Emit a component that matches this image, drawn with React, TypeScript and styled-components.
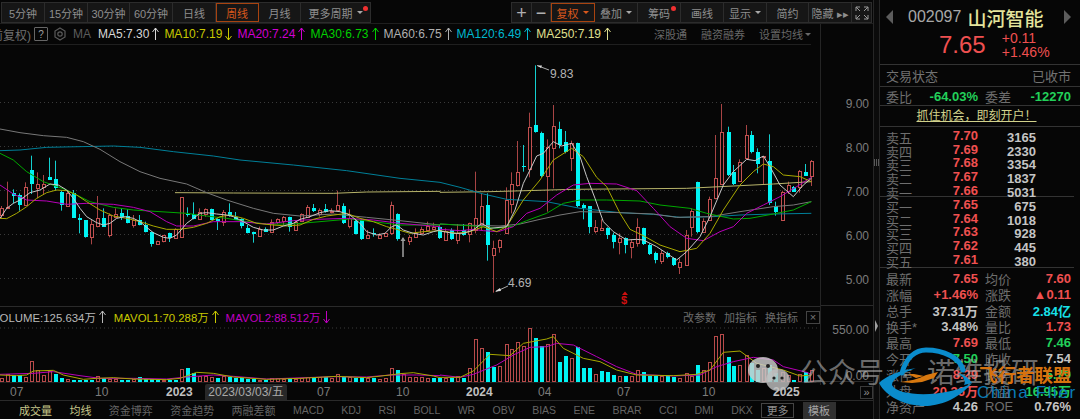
import React from 'react';
import styled, { createGlobalStyle } from 'styled-components';

const GlobalStyle = createGlobalStyle`
	html, body {
		margin: 0;
		padding: 0;
		background: #060606;
	}
	* {
		box-sizing: border-box;
	}
`;

const FONT = '"Liberation Sans", "Noto Sans CJK SC", sans-serif';
const RED = '#ef5050';
const GREEN = '#22d05a';
const BG = '#060606';

type Pt = [number, number];
type Candle = [number, number, number, number, number, 'r' | 'c'];
type Vol = [number, 'r' | 'c', number];

// chart data was read off the picture at 3x, so convert back with these
const LEFT_X = 0;
const RIGHT_X = 440;
const LEFT_Y = 120;
const RIGHT_Y = 70;
const VOL_Y = 295;

const candlesLeft: Candle[] = [
	[3, 265, 285, 258, 297, 'r'], [21, 262, 264, 185, 266, 'r'], [40, 218, 226, 208, 250, 'c'], [57, 226, 256, 220, 272, 'c'],
	[75, 200, 254, 187, 256, 'r'], [92, 150, 192, 107, 222, 'c'], [110, 192, 203, 157, 235, 'r'], [128, 192, 200, 165, 225, 'r'],
	[146, 170, 178, 113, 178, 'c'], [165, 178, 204, 122, 212, 'c'], [183, 215, 254, 212, 272, 'c'], [201, 218, 258, 210, 260, 'r'],
	[219, 218, 292, 210, 292, 'c'], [237, 293, 300, 282, 340, 'c'], [255, 300, 352, 300, 353, 'c'], [272, 313, 352, 300, 373, 'r'],
	[291, 295, 320, 228, 322, 'r'], [309, 294, 320, 265, 320, 'c'], [327, 285, 345, 280, 352, 'r'], [345, 282, 290, 265, 295, 'r'],
	[363, 280, 292, 265, 300, 'c'], [381, 288, 308, 268, 310, 'c'], [399, 300, 316, 285, 323, 'r'], [417, 300, 314, 285, 316, 'c'],
	[435, 314, 336, 305, 337, 'c'], [454, 336, 372, 335, 380, 'c'], [471, 364, 373, 362, 375, 'r'], [489, 346, 365, 345, 367, 'r'],
	[507, 340, 356, 338, 366, 'c'], [525, 328, 355, 325, 357, 'r'], [543, 232, 352, 232, 353, 'r'], [561, 282, 286, 262, 290, 'c'],
	[579, 282, 296, 247, 298, 'c'], [597, 275, 296, 265, 298, 'r'], [615, 267, 282, 265, 290, 'r'], [633, 266, 298, 266, 300, 'c'],
	[651, 298, 305, 295, 330, 'c'], [669, 276, 306, 270, 318, 'r'], [687, 276, 288, 250, 290, 'c'], [705, 290, 298, 276, 300, 'c'],
	[723, 298, 320, 295, 325, 'c'], [741, 324, 338, 315, 340, 'c'], [759, 336, 342, 335, 368, 'c'], [777, 326, 347, 320, 348, 'r'],
	[795, 326, 334, 322, 336, 'c'], [813, 305, 334, 298, 336, 'r'], [831, 298, 308, 295, 312, 'r'], [849, 292, 305, 288, 316, 'r'],
	[867, 292, 322, 290, 335, 'c'], [885, 305, 328, 300, 330, 'r'], [903, 283, 303, 280, 305, 'r'], [921, 262, 292, 255, 294, 'r'],
	[939, 265, 274, 252, 276, 'c'], [957, 270, 282, 265, 290, 'r'], [975, 267, 276, 252, 278, 'c'], [993, 272, 273, 265, 280, 'r'],
	[1011, 255, 270, 212, 272, 'r'], [1029, 258, 310, 250, 312, 'c'], [1047, 295, 320, 268, 325, 'r'], [1065, 302, 342, 298, 343, 'c'],
	[1083, 300, 358, 298, 360, 'c'], [1101, 344, 353, 330, 354, 'r'], [1120, 340, 344, 325, 350, 'c'], [1137, 344, 352, 340, 356, 'r'],
	[1155, 340, 348, 338, 350, 'r'], [1173, 256, 340, 245, 345, 'r'], [1191, 282, 358, 280, 362, 'c'], [1227, 350, 362, 345, 375, 'r'],
	[1245, 340, 352, 325, 354, 'r'], [1263, 326, 338, 320, 340, 'r'], [1281, 319, 330, 305, 332, 'r'], [1299, 320, 327, 308, 330, 'r'],
	[1317, 322, 356, 315, 357, 'c'],
];

const candlesRight: Candle[] = [
	[15, 482, 510, 475, 512, 'r'], [33, 480, 506, 475, 510, 'c'], [51, 488, 510, 462, 522, 'r'], [69, 480, 495, 462, 497, 'c'],
	[87, 460, 492, 458, 517, 'r'], [105, 445, 480, 305, 490, 'r'], [123, 408, 462, 370, 480, 'r'], [142, 406, 527, 370, 572, 'c'],
	[160, 535, 556, 512, 668, 'r'], [177, 510, 530, 508, 548, 'r'], [197, 390, 488, 352, 492, 'r'], [214, 342, 402, 307, 430, 'r'],
	[232, 307, 345, 213, 350, 'r'], [249, 287, 290, 225, 305, 'c'], [268, 170, 295, 128, 322, 'r'], [286, 165, 186, -14, 188, 'c'],
	[304, 190, 318, 185, 322, 'c'], [322, 232, 320, 208, 425, 'r'], [340, 168, 233, 105, 355, 'r'], [358, 177, 225, 155, 235, 'c'],
	[376, 216, 247, 183, 250, 'c'], [394, 220, 265, 212, 303, 'r'], [412, 220, 408, 218, 412, 'c'], [430, 405, 414, 400, 448, 'c'],
	[448, 408, 470, 408, 490, 'c'], [466, 470, 482, 450, 490, 'r'], [484, 475, 480, 448, 482, 'r'], [502, 475, 495, 472, 507, 'c'],
	[520, 495, 515, 488, 535, 'c'], [538, 505, 517, 490, 553, 'r'], [556, 505, 526, 502, 550, 'c'], [574, 516, 532, 508, 565, 'r'],
	[592, 470, 518, 445, 530, 'r'], [610, 475, 522, 473, 525, 'c'], [628, 524, 552, 520, 555, 'c'], [645, 550, 570, 545, 580, 'c'],
	[663, 550, 573, 540, 582, 'r'], [682, 550, 563, 545, 565, 'c'], [700, 565, 587, 562, 588, 'c'], [717, 577, 592, 565, 612, 'r'],
	[737, 495, 584, 480, 585, 'r'], [754, 422, 470, 415, 500, 'r'], [772, 335, 486, 335, 490, 'c'], [790, 452, 484, 445, 486, 'r'],
	[808, 388, 450, 380, 452, 'r'], [826, 325, 386, 195, 388, 'r'], [843, 185, 340, 102, 342, 'r'], [863, 185, 315, 170, 318, 'c'],
	[880, 305, 340, 285, 345, 'c'], [898, 277, 335, 268, 336, 'r'], [917, 195, 265, 165, 268, 'r'], [934, 196, 248, 183, 250, 'c'],
	[952, 246, 282, 235, 310, 'c'], [970, 258, 260, 258, 345, 'r'], [988, 274, 400, 193, 405, 'c'], [1006, 408, 426, 395, 437, 'c'],
	[1025, 365, 450, 362, 452, 'r'], [1043, 345, 362, 335, 372, 'r'], [1060, 350, 365, 348, 366, 'c'], [1078, 303, 352, 300, 368, 'r'],
	[1096, 305, 318, 282, 318, 'c'], [1114, 273, 318, 270, 348, 'r'],
];

const MA_LINES: { color: string; left: Pt[]; right: Pt[]; width?: number }[] = [
	{
		color: '#b8b46a',
		left: [[525, 218], [700, 219], [1000, 220], [1100, 216], [1320, 214]],
		right: [[0, 367], [150, 365], [400, 358], [740, 355], [880, 348], [1000, 342], [1114, 335]],
	},
	{
		color: '#007f98',
		left: [[0, 92], [60, 90], [140, 82], [240, 80], [340, 78], [420, 82], [520, 95], [640, 108], [720, 120], [880, 135], [1040, 152], [1200, 175], [1320, 187]],
		right: [[0, 337], [60, 352], [130, 372], [200, 388], [320, 395], [420, 415], [540, 428], [640, 433], [720, 442], [820, 440], [900, 435], [1000, 432], [1114, 430]],
	},
	{
		color: '#787878',
		left: [[0, 27], [60, 38], [130, 47], [200, 52], [250, 65], [300, 88], [360, 125], [420, 155], [480, 175], [560, 192], [620, 218], [680, 240], [760, 265], [820, 280], [900, 288], [1000, 282], [1100, 292], [1200, 302], [1320, 315]],
		right: [[0, 462], [60, 465], [180, 468], [240, 462], [300, 448], [360, 435], [420, 425], [540, 428], [640, 432], [710, 442], [810, 440], [900, 425], [1000, 410], [1060, 405], [1114, 395]],
	},
	{
		color: '#00a800',
		left: [[0, 100], [40, 120], [80, 155], [130, 185], [200, 210], [270, 245], [340, 262], [400, 270], [480, 275], [560, 280], [620, 288], [680, 295], [740, 305], [800, 312], [880, 312], [960, 305], [1050, 297], [1120, 305], [1200, 315], [1320, 315]],
		right: [[0, 462], [100, 468], [170, 475], [220, 468], [260, 452], [320, 430], [370, 400], [420, 390], [500, 390], [600, 393], [660, 405], [750, 415], [800, 430], [880, 447], [930, 445], [1000, 432], [1060, 420], [1114, 395]],
	},
	{
		color: '#b800b8',
		left: [[0, 195], [40, 222], [80, 240], [140, 243], [200, 253], [260, 250], [340, 253], [400, 262], [450, 275], [500, 305], [530, 318], [580, 318], [640, 305], [720, 305], [800, 312], [880, 302], [950, 298], [1040, 295], [1120, 300], [1200, 310], [1320, 320]],
		right: [[0, 478], [60, 482], [100, 478], [130, 482], [175, 485], [220, 470], [260, 430], [300, 415], [350, 375], [400, 345], [450, 340], [530, 342], [590, 362], [640, 415], [690, 470], [740, 505], [790, 512], [840, 485], [880, 470], [920, 430], [970, 405], [1020, 380], [1070, 350], [1114, 322]],
	},
	{
		color: '#a8a800',
		left: [[0, 295], [20, 296], [50, 280], [80, 260], [110, 235], [140, 218], [170, 210], [200, 212], [230, 225], [260, 245], [300, 270], [340, 288], [380, 295], [420, 305], [460, 318], [500, 328], [540, 328], [580, 322], [620, 310], [660, 290], [690, 285], [730, 295], [770, 310], [820, 315], [860, 318], [900, 315], [940, 298], [980, 288], [1040, 280], [1080, 295], [1120, 305], [1160, 320], [1190, 328], [1230, 340], [1270, 335], [1320, 332]],
		right: [[0, 482], [50, 490], [90, 485], [130, 470], [170, 485], [200, 470], [250, 390], [300, 330], [340, 270], [395, 235], [430, 260], [470, 322], [500, 350], [540, 430], [570, 478], [610, 497], [660, 525], [720, 545], [770, 535], [810, 490], [850, 420], [900, 345], [940, 305], [970, 282], [1000, 290], [1030, 315], [1080, 320], [1114, 335]],
	},
	{
		color: '#c8c8c8',
		left: [[0, 295], [20, 265], [40, 250], [60, 240], [90, 218], [120, 210], [150, 192], [175, 195], [200, 210], [220, 235], [240, 265], [260, 290], [290, 308], [310, 315], [330, 310], [350, 295], [375, 290], [400, 295], [420, 305], [440, 322], [460, 338], [490, 352], [510, 355], [530, 345], [560, 310], [580, 295], [600, 280], [620, 278], [650, 282], [680, 285], [700, 290], [730, 305], [760, 322], [790, 330], [820, 330], [850, 318], [880, 310], [900, 298], [930, 290], [960, 278], [990, 272], [1020, 275], [1050, 285], [1080, 310], [1100, 335], [1130, 345], [1155, 340], [1175, 320], [1190, 315], [1210, 330], [1240, 340], [1270, 345], [1300, 335], [1320, 330]],
		right: [[0, 483], [40, 490], [70, 490], [100, 480], [125, 460], [150, 475], [200, 470], [225, 420], [250, 340], [270, 300], [290, 258], [310, 250], [340, 215], [365, 228], [395, 220], [420, 260], [440, 320], [465, 385], [490, 455], [520, 485], [560, 510], [590, 508], [610, 510], [650, 530], [680, 550], [710, 570], [740, 545], [780, 500], [810, 440], [850, 345], [880, 305], [920, 268], [945, 272], [970, 258], [990, 290], [1020, 345], [1060, 380], [1090, 345], [1114, 325]],
	},
];

const volumesLeft: Vol[] = [
	[3, 'r', 12], [21, 'r', 24], [40, 'c', 20], [57, 'c', 20], [75, 'r', 15], [92, 'r', 62], [110, 'r', 36], [128, 'r', 20], [146, 'r', 32], [165, 'c', 22],
	[183, 'c', 12], [201, 'r', 8], [219, 'c', 6], [237, 'c', 6], [255, 'c', 4], [272, 'c', 6], [291, 'r', 18], [309, 'c', 10], [327, 'r', 8], [345, 'r', 8],
	[363, 'c', 6], [381, 'c', 6], [399, 'r', 8], [417, 'c', 14], [435, 'c', 8], [454, 'c', 8], [471, 'c', 6], [489, 'r', 6], [507, 'c', 4], [525, 'c', 5],
	[543, 'r', 37], [561, 'c', 40], [579, 'c', 26], [597, 'r', 18], [615, 'r', 16], [633, 'r', 14], [651, 'c', 12], [669, 'r', 18], [687, 'c', 14], [705, 'c', 10],
	[723, 'c', 10], [741, 'c', 8], [759, 'c', 8], [777, 'r', 6], [795, 'c', 6], [813, 'r', 10], [831, 'r', 10], [849, 'r', 8], [867, 'c', 10], [885, 'r', 8],
	[903, 'r', 10], [921, 'r', 14], [939, 'c', 10], [957, 'r', 14], [975, 'c', 14], [993, 'r', 12], [1011, 'r', 24], [1029, 'c', 14], [1047, 'r', 14], [1065, 'c', 12],
	[1083, 'c', 14], [1101, 'r', 10], [1120, 'c', 10], [1137, 'r', 8], [1155, 'r', 10], [1173, 'r', 42], [1191, 'c', 36], [1209, 'r', 24], [1227, 'r', 14], [1245, 'r', 14],
	[1263, 'r', 14], [1281, 'r', 12], [1299, 'c', 10], [1317, 'c', 10],
];

const volumesRight: Vol[] = [
	[15, 'r', 10], [33, 'c', 10], [51, 'r', 18], [69, 'c', 12], [87, 'r', 42], [105, 'r', 128], [123, 'r', 102], [142, 'c', 88], [160, 'c', 44], [177, 'r', 46],
	[197, 'r', 112], [214, 'r', 98], [232, 'r', 120], [249, 'r', 106], [268, 'r', 160], [286, 'c', 132], [304, 'c', 108], [322, 'r', 112], [340, 'r', 144], [358, 'c', 58],
	[376, 'c', 78], [394, 'r', 72], [412, 'c', 104], [430, 'c', 40], [448, 'c', 42], [466, 'r', 22], [484, 'c', 32], [502, 'c', 28], [520, 'c', 20], [538, 'r', 18],
	[556, 'c', 16], [574, 'r', 18], [592, 'r', 36], [610, 'c', 28], [628, 'c', 18], [645, 'c', 16], [663, 'r', 18], [682, 'c', 18], [700, 'c', 14], [717, 'r', 12],
	[737, 'r', 26], [754, 'r', 18], [772, 'c', 50], [790, 'r', 34], [808, 'r', 58], [826, 'r', 138], [843, 'r', 144], [863, 'c', 74], [880, 'c', 46], [898, 'r', 50],
	[917, 'r', 80], [934, 'c', 55], [952, 'c', 35], [970, 'r', 40], [988, 'c', 50], [1006, 'c', 25], [1025, 'r', 30], [1043, 'r', 20], [1060, 'c', 4], [1078, 'r', 22],
	[1096, 'c', 28], [1114, 'r', 36],
];

const VOL_LINES: { color: string; left: Pt[]; right: Pt[] }[] = [
	{
		color: '#b800b8',
		left: [[0, 238], [100, 235], [160, 230], [240, 242], [300, 250], [400, 250], [500, 252], [560, 246], [640, 240], [700, 244], [800, 252], [1000, 245], [1100, 246], [1170, 240], [1250, 240], [1320, 242]],
		right: [[0, 240], [60, 247], [100, 238], [170, 210], [220, 180], [270, 157], [320, 155], [350, 145], [400, 150], [470, 185], [530, 215], [590, 238], [700, 243], [780, 240], [830, 215], [880, 200], [940, 187], [1000, 195], [1030, 215], [1100, 232], [1114, 238]],
	},
	{
		color: '#a8a800',
		left: [[0, 240], [50, 242], [80, 240], [100, 228], [160, 226], [190, 240], [250, 253], [290, 250], [340, 248], [400, 252], [500, 254], [540, 250], [590, 232], [640, 235], [700, 246], [800, 253], [900, 250], [1010, 244], [1100, 248], [1170, 240], [1200, 236], [1240, 233], [1300, 243], [1320, 248]],
		right: [[0, 247], [60, 247], [100, 228], [150, 178], [210, 182], [250, 145], [320, 132], [340, 125], [370, 160], [430, 190], [480, 200], [530, 225], [590, 240], [700, 242], [770, 238], [810, 225], [850, 172], [900, 168], [950, 205], [1030, 225], [1080, 243], [1114, 240]],
	},
];

const path = (pts: Pt[], ox: number, oy: number) => pts.map(([x, y]) => `${ox + x / 3},${oy + y / 3}`).join(' ');

const Page = styled.div`
	position: relative;
	display: grid;
	grid-template-columns: 873px 7px 200px;
	width: 1080px;
	height: 419px;
	overflow: hidden;
	background: ${BG};
	font-family: ${FONT};
	font-size: 11px;
	color: #8c8c8c;
`;

const Main = styled.div`
	display: flex;
	flex-direction: column;
	min-width: 0;
`;

const Toolbar = styled.div`
	display: flex;
	justify-content: space-between;
	align-items: flex-start;
	height: 24px;
	padding: 2px 1px 0 1px;
	border-bottom: 1px solid #1e1e1e;
`;

const ButtonGroup = styled.div`
	display: flex;
	height: 21px;
	background: #161616;
	border: 1px solid #2c2c2c;
`;

const ToolButton = styled.div<{ $w: number; $active?: boolean }>`
	position: relative;
	display: flex;
	align-items: center;
	justify-content: center;
	gap: 4px;
	width: ${(p) => p.$w}px;
	height: 100%;
	border-right: 1px solid #2c2c2c;
	color: ${(p) => (p.$active ? '#d9581c' : '#8e8e8e')};
	outline: ${(p) => (p.$active ? '1px solid #a8430f' : 'none')};
	outline-offset: -1px;
	&:last-child {
		border-right: none;
	}
`;

const SymbolGlyph = styled.span`
	font-size: 18px;
	line-height: 1;
	color: #b0b0b0;
`;

const Caret = styled.i<{ $color?: string }>`
	display: block;
	width: 0;
	height: 0;
	border-left: 3px solid transparent;
	border-right: 3px solid transparent;
	border-top: 3px solid ${(p) => p.$color || '#a8a8a8'};
`;

const RedDot = styled.i<{ $right: number }>`
	position: absolute;
	top: 3px;
	right: ${(p) => p.$right}px;
	width: 5px;
	height: 5px;
	border-radius: 50%;
	background: #f03030;
`;

const Body = styled.div`
	display: grid;
	grid-template-columns: 821px 52px;
	height: 361px;
`;

const ChartColumn = styled.div`
	display: flex;
	flex-direction: column;
	min-width: 0;
	border-right: 1px solid #242424;
	overflow: hidden;
`;

const MaRow = styled.div`
	display: flex;
	align-items: center;
	height: 21px;
	margin-right: 9px;
	border-bottom: 1px solid #1f1f1f;
	font-size: 12px;
	white-space: nowrap;
	& > * {
		flex: none;
	}
`;

const Adjust = styled.span`
	margin-left: -13px;
	margin-right: 3px;
	color: #707070;
`;

const HelpBox = styled.span`
	display: flex;
	align-items: center;
	justify-content: center;
	width: 14px;
	height: 14px;
	margin-right: 5px;
	border: 1px solid #666;
	border-radius: 1px;
	font-size: 10px;
	color: #a0a0a0;
`;

const MaName = styled.span`
	margin: 0 7px 0 6px;
	color: #5c5c5c;
`;

const MaValue = styled.span<{ $color: string }>`
	display: flex;
	align-items: center;
	flex: none;
	gap: 3px;
	margin-right: 5px;
	color: ${(p) => p.$color};
`;

const VolumeValue = styled(MaValue)`
	margin-right: 7px;
`;

const MaLinks = styled.span`
	display: flex;
	align-items: center;
	gap: 14px;
	margin-left: auto;
	font-size: 11px;
	color: #686868;
`;

const MaCaretLink = styled.span`
	display: flex;
	align-items: center;
	gap: 2px;
`;

const PriceSvg = styled.svg`
	display: block;
	flex: none;
	width: 821px;
	height: 261px;
`;

const VolumeHeader = styled.div`
	display: flex;
	align-items: center;
	height: 21px;
	border-top: 1px solid #2a2a2a;
	font-size: 11.4px;
	white-space: nowrap;
`;

const VolumeName = styled.span`
	display: flex;
	align-items: center;
	flex: none;
	gap: 3px;
	margin-left: -8px;
	margin-right: 8px;
	color: #b8b8b8;
`;

const VolumeTool = styled.span`
	margin-left: auto;
	display: flex;
	align-items: center;
	gap: 8px;
	font-size: 11px;
	color: #6c6c6c;
`;

const CloseBox = styled.span`
	display: flex;
	align-items: center;
	justify-content: center;
	width: 14px;
	height: 13px;
	border: 1px solid #444;
	font-size: 11px;
	line-height: 1;
	color: #777;
`;

const VolumeSvg = styled.svg`
	display: block;
	flex: none;
	width: 821px;
	height: 58px;
`;

const AxisColumn = styled.div`
	display: flex;
	flex-direction: column;
`;

const PriceAxis = styled.div`
	height: 282px;
	padding-top: 72px;
	border-bottom: 1px solid #2a2a2a;
`;

const AxisLabel = styled.div`
	height: 44px;
	line-height: 17px;
	padding-right: 4px;
	text-align: right;
	font-size: 12px;
	color: #7c7c7c;
`;

const VolumeAxis = styled.div`
	display: flex;
	flex-direction: column;
	gap: 32px;
	height: 76px;
	padding: 17px 4px 0 0;
	border-bottom: 1px solid #2a2a2a;
	text-align: right;
	font-size: 12px;
	line-height: 14px;
	color: #7c7c7c;
`;

const TimeRow = styled.div`
	display: flex;
	align-items: center;
	flex: none;
	height: 16px;
	width: 873px;
	padding-left: 10px;
	font-size: 12px;
	color: #7c7c7c;
	margin-top: -1px;
`;

const TimeTick = styled.span<{ $w: number; $bold?: boolean }>`
	flex: none;
	width: ${(p) => p.$w}px;
	color: ${(p) => (p.$bold ? '#c0c0c0' : '#7c7c7c')};
	font-weight: ${(p) => (p.$bold ? 700 : 400)};
`;

const DateChip = styled.span`
	flex: none;
	width: 82px;
	height: 16px;
	margin-right: 30px;
	background: #282828;
	color: #a8a8a8;
	text-align: center;
	line-height: 16px;
	border-radius: 2px 2px 0 0;
`;

const ExpandBox = styled.span`
	display: flex;
	align-items: center;
	justify-content: center;
	flex: none;
	width: 13px;
	height: 13px;
	border: 1px solid #3a3a3a;
	font-size: 11px;
	line-height: 1;
	color: #909090;
`;

const TabBar = styled.div`
	display: flex;
	align-items: center;
	gap: 17.4px;
	flex: none;
	height: 19px;
	width: 873px;
	padding-left: 19px;
	border-top: 1px solid #2a2a2a;
	color: #646464;
`;

const Tab = styled.span<{ $on?: boolean; $latin?: boolean }>`
	white-space: nowrap;
	font-size: ${(p) => (p.$latin ? '10.5px' : '11px')};
	color: ${(p) => (p.$on ? '#c6c68a' : '#646464')};
`;

const MoreTab = styled.span`
	display: flex;
	align-items: center;
	justify-content: center;
	width: 33px;
	height: 15px;
	margin: 0 -9px;
	border: 1px solid #444;
	color: #8c8c8c;
`;

const TemplateTab = styled.span`
	display: flex;
	align-items: center;
	justify-content: center;
	width: 33px;
	height: 17px;
	background: #303030;
	color: #a4a4a4;
`;

const Divider = styled.div`
	display: flex;
	flex-direction: column;
	align-items: center;
	gap: 154px;
	padding-top: 159px;
	background: #0b0b0b;
	border-left: 1px solid #262626;
	border-right: 1px solid #262626;
`;

const GripMark = styled.i`
	display: block;
	width: 5px;
	height: 7px;
	background: repeating-linear-gradient(90deg, #585858 0, #585858 1px, transparent 1px, transparent 2px);
`;

const SideArrow = styled.i`
	display: block;
	width: 0;
	height: 0;
	border-top: 6px solid transparent;
	border-bottom: 6px solid transparent;
	border-left: 3px solid #a0a0a0;
`;

const Panel = styled.aside`
	display: flex;
	flex-direction: column;
	overflow: hidden;
	min-width: 0;
`;

const QuoteHead = styled.div`
	height: 65px;
	padding-top: 6px;
	border-bottom: 1px solid #333;
`;

const TitleLine = styled.div`
	display: flex;
	align-items: center;
	height: 22px;
	padding-left: 6px;
`;

const NavArrow = styled.i<{ $dir: 'left' | 'right' }>`
	display: block;
	width: 0;
	height: 0;
	border-top: 7px solid transparent;
	border-bottom: 7px solid transparent;
	${(p) => (p.$dir === 'left' ? 'border-right: 7px solid #5c5c5c;' : 'border-left: 7px solid #5c5c5c;')}
`;

const Code = styled.span`
	margin-left: 15px;
	font-size: 16px;
	color: #a8a8a8;
`;

const StockName = styled.span`
	margin-left: 6px;
	margin-right: 21px;
	font-size: 19px;
	font-weight: 500;
	color: #e4e49c;
`;

const PriceLine = styled.div`
	display: flex;
	align-items: center;
	gap: 16px;
	padding-left: 59px;
	margin-top: 2px;
	color: ${RED};
`;

const BigPrice = styled.span`
	font-size: 24px;
	line-height: 30px;
`;

const Change = styled.div`
	font-size: 14px;
	line-height: 14px;
	font-weight: 500;
`;

const StatusLine = styled.div`
	display: flex;
	align-items: center;
	justify-content: space-between;
	height: 22px;
	padding: 0 9px 0 6px;
	border-bottom: 1px solid #333;
	font-size: 13px;
	color: #727272;
`;

const StatRow = styled.div<{ $h: number; $line?: boolean }>`
	display: grid;
	grid-template-columns: 92px 86px;
	column-gap: 7px;
	align-items: center;
	height: ${(p) => p.$h}px;
	padding-left: 6px;
	${(p) => (p.$line ? 'border-bottom: 1px solid #333;' : '')}
	font-size: 13px;
`;

const StatCell = styled.div`
	display: flex;
	justify-content: space-between;
	align-items: center;
	white-space: nowrap;
`;

const Label = styled.span`
	color: #6e6e6e;
`;

const Value = styled.span<{ $color?: string }>`
	font-weight: 700;
	color: ${(p) => p.$color || '#c4c4c4'};
`;

const PromoLine = styled.div`
	height: 21px;
	line-height: 20px;
	text-align: center;
	padding-right: 7px;
	border-bottom: 1px solid #333;
	font-size: 12px;
	color: #d2d28c;
	text-decoration: underline;
`;

const BookGroup = styled.div<{ $bids?: boolean }>`
	padding-top: ${(p) => (p.$bids ? 0 : 1)}px;
	height: ${(p) => (p.$bids ? 71 : 70)}px;
	margin: 0 6px 0 0;
	border-bottom: 1px solid #333;
`;

const BookRow = styled.div`
	display: grid;
	grid-template-columns: 92px 58px;
	align-items: center;
	height: 13.7px;
	padding-left: 6px;
	font-size: 13px;
`;

const BookPrice = styled.span`
	display: flex;
	justify-content: space-between;
	color: #6e6e6e;
`;

const BookQty = styled.span`
	text-align: right;
	font-weight: 700;
	color: #c4c4c4;
`;

const StatsBlock = styled.div`
	padding-top: 1px;
`;

const Watermark = styled.div`
	position: absolute;
	left: 800px;
	top: 357px;
	display: flex;
	align-items: center;
	font-size: 28px;
	line-height: 34px;
	color: rgba(176, 176, 176, 0.62);
	white-space: nowrap;
`;

const WatermarkGap = styled.span`
	width: 43px;
	text-align: center;
`;

const BubbleMark = styled.svg`
	position: absolute;
	left: 745px;
	top: 352px;
	width: 50px;
	height: 46px;
`;

const FlierLogo = styled.svg`
	position: absolute;
	left: 876px;
	top: 345px;
	width: 104px;
	height: 62px;
`;

const FlierName = styled.div`
	position: absolute;
	left: 979px;
	top: 365px;
	font-size: 18.5px;
	line-height: 22px;
	font-weight: 700;
	color: #d6720e;
	white-space: nowrap;
`;

const FlierLatin = styled.div`
	position: absolute;
	left: 977px;
	top: 384px;
	font-size: 17px;
	line-height: 18px;
	letter-spacing: 1.6px;
	color: #0a7cb8;
	white-space: nowrap;
`;

const Arrow = ({ color, down }: { color: string; down?: boolean }) => (
	<svg width="7" height="14" viewBox="0 0 7 14" fill="none" stroke={color} strokeWidth="1">
		{down ? <path d="M3.5 1V13M0.5 9L3.5 13L6.5 9" /> : <path d="M3.5 13V1M0.5 5L3.5 1L6.5 5" />}
	</svg>
);

const GearIcon = () => (
	<svg width="14" height="14" viewBox="0 0 14 14" fill="none" stroke="#5a5a5a" strokeWidth="1.2">
		<path d="M7 1L12 4V10L7 13L2 10V4Z" />
		<circle cx="7" cy="7" r="2.2" />
	</svg>
);

const ExpandIcon = () => (
	<svg width="14" height="14" viewBox="0 0 14 14" fill="none" stroke="#9a9a9a" strokeWidth="1">
		<path d="M1 5V1H5M1 1L5 5M9 1H13V5M13 1L9 5M1 9V13H5M1 13L5 9M13 9V13H9M13 13L9 9" />
	</svg>
);

const candleMarks = (list: Candle[], ox: number, oy: number) =>
	list.map(([x, top, bot, wickTop, wickBot, kind], i) => {
		const n = Math.round(ox + x / 3);
		const cyan = kind === 'c';
		const y = Math.round(oy + top / 3);
		const h = Math.max(Math.round((bot - top) / 3), 1);
		return (
			<g key={`${ox}-${i}`}>
				<line x1={n + 0.5} x2={n + 0.5} y1={oy + wickTop / 3} y2={oy + wickBot / 3} stroke={cyan ? '#13cfcf' : '#a84444'} strokeWidth="1" />
				{cyan ? (
					<rect x={n - 1} y={y} width={4} height={h} fill="#00f4f4" />
				) : (
					<rect x={n - 0.5} y={y + 0.5} width={3} height={h} fill={BG} stroke="#c25050" strokeWidth="1" />
				)}
			</g>
		);
	});

const volumeBars = (list: Vol[], ox: number) =>
	list.map(([x, kind, h], i) => {
		const n = Math.round(ox + x / 3);
		const top = Math.round(VOL_Y + (260 - h) / 3);
		return kind === 'c' ? (
			<rect key={`${ox}-${i}`} x={n - 1} y={top} width={4} height={382 - top} fill="#00f4f4" />
		) : (
			<rect key={`${ox}-${i}`} x={n - 0.5} y={top + 0.5} width={3} height={381 - top} fill={BG} stroke="#b84a4a" strokeWidth="1" />
		);
	});

const PriceChart = () => (
	<PriceSvg viewBox="0 45 821 261">
		{[102.5, 146.5, 190.5, 234.5, 278.5].map((y) => (
			<line key={y} x1="0" x2="821" y1={y} y2={y} stroke="#3a3a3a" strokeWidth="1" strokeDasharray="1 3" />
		))}
		{candleMarks(candlesLeft, LEFT_X, LEFT_Y)}
		{candleMarks(candlesRight, RIGHT_X, RIGHT_Y)}
		<line x1="403" x2="403" y1="238" y2="257" stroke="#7a7a7a" strokeWidth="2" />
		<path d="M400.5 241L403 237L405.5 241Z" fill="#9a9a9a" />
		{MA_LINES.map((line) => (
			<polyline
				key={line.color}
				points={`${path(line.left, LEFT_X, LEFT_Y)} ${path(line.right, RIGHT_X, RIGHT_Y)}`}
				fill="none"
				stroke={line.color}
				strokeWidth="1"
				strokeLinejoin="round"
			/>
		))}
		<path d="M537 65.5L549 70" stroke="#aaa" strokeWidth="1" fill="none" />
		<path d="M537 65.5L542 65.5L541 68Z" fill="#ddd" />
		<text x="550" y="78" fontSize="12" fill="#b4b4b4" fontFamily={FONT}>9.83</text>
		<path d="M496 291.5L508 286" stroke="#aaa" strokeWidth="1" fill="none" />
		<path d="M495 291.5L500 288L501 291Z" fill="#ddd" />
		<text x="508" y="287" fontSize="12" fill="#b4b4b4" fontFamily={FONT}>4.69</text>
		<text x="621" y="304" fontSize="11" fontWeight="700" fill="#d01010" fontFamily={FONT}>$</text>
		<path d="M622 295L625 291.5L628 295Z" fill="#d01010" />
	</PriceSvg>
);

const VolumeChart = () => (
	<VolumeSvg viewBox="0 327 821 58">
		<line x1="0" x2="821" y1="328" y2="328" stroke="#3a3a3a" strokeWidth="1" strokeDasharray="1 3" />
		{volumeBars(volumesLeft, LEFT_X)}
		{volumeBars(volumesRight, RIGHT_X)}
		<line x1="0" x2="821" y1="382.5" y2="382.5" stroke="#1f1f1f" strokeWidth="1" />
		{VOL_LINES.map((line) => (
			<polyline
				key={line.color}
				points={`${path(line.left, LEFT_X, VOL_Y)} ${path(line.right, RIGHT_X, VOL_Y)}`}
				fill="none"
				stroke={line.color}
				strokeWidth="1"
				strokeLinejoin="round"
			/>
		))}
	</VolumeSvg>
);

const asks: [string, string, string][] = [
	['卖五', '7.70', '3165'], ['卖四', '7.69', '2330'], ['卖三', '7.68', '3354'], ['卖二', '7.67', '1837'], ['卖一', '7.66', '5031'],
];
const bids: [string, string, string][] = [
	['买一', '7.65', '675'], ['买二', '7.64', '1018'], ['买三', '7.63', '928'], ['买四', '7.62', '445'], ['买五', '7.61', '380'],
];

const stats: [string, string, string | undefined, string, string, string | undefined][] = [
	['最新', '7.65', RED, '均价', '7.60', RED],
	['涨幅', '+1.46%', RED, '涨跌', '▲0.11', RED],
	['总手', '37.31万', undefined, '金额', '2.84亿', '#18e0e8'],
	['换手*', '3.48%', undefined, '量比', '1.73', RED],
	['最高', '7.69', RED, '最低', '7.46', GREEN],
	['今开', '7.50', GREEN, '昨收', '7.54', undefined],
	['涨停', '8.29', RED, '跌停', '6.79', GREEN],
	['外盘', '20.36万', RED, '内盘', '16.95万', GREEN],
	['净资产', '4.26', undefined, 'ROE', '0.76%', undefined],
];

const toolsLeft: [string, number][] = [['5分钟', 43], ['15分钟', 43], ['30分钟', 42], ['60分钟', 43], ['日线', 43]];
const cnTabs = ['资金博弈', '资金趋势', '两融差额'];
const latinTabs = ['MACD', 'KDJ', 'RSI', 'BOLL', 'WR', 'OBV', 'BIAS', 'ENE', 'BRAR', 'CCI', 'DMI', 'DKX'];
const maValues: [string, string, boolean?][] = [
	['MA5:7.30', '#d8d8d8'],
	['MA10:7.19', '#c8c800', true],
	['MA20:7.24', '#d000d0'],
	['MA30:6.73', '#00d000'],
	['MA60:6.75', '#b0b0b0'],
	['MA120:6.49', '#00b8d0'],
	['MA250:7.19', '#e0e090'],
];

export default function App() {
	return (
		<>
			<GlobalStyle />
			<Page>
				<Main>
					<Toolbar>
						<ButtonGroup>
							{toolsLeft.map(([label, w]) => (
								<ToolButton key={label} $w={w}>{label}</ToolButton>
							))}
							<ToolButton $w={43} $active>周线</ToolButton>
							<ToolButton $w={42}>月线</ToolButton>
							<ToolButton $w={69}>
								更多周期 <Caret />
								<RedDot $right={2} />
							</ToolButton>
						</ButtonGroup>
						<ButtonGroup>
							<ToolButton $w={20}><SymbolGlyph>+</SymbolGlyph></ToolButton>
							<ToolButton $w={19}><SymbolGlyph>−</SymbolGlyph></ToolButton>
							<ToolButton $w={44} $active>复权 <Caret $color="#d9581c" /></ToolButton>
							<ToolButton $w={43}>叠加 <Caret /></ToolButton>
							<ToolButton $w={43}>
								筹码
								<RedDot $right={4} />
							</ToolButton>
							<ToolButton $w={43}>画线</ToolButton>
							<ToolButton $w={43}>显示 <Caret /></ToolButton>
							<ToolButton $w={42}>简约</ToolButton>
							<ToolButton $w={43}>隐藏 ▸▸</ToolButton>
							<ToolButton $w={19}><ExpandIcon /></ToolButton>
						</ButtonGroup>
					</Toolbar>
					<Body>
						<ChartColumn>
							<MaRow>
								<Adjust>(前复权)</Adjust>
								<HelpBox>?</HelpBox>
								<GearIcon />
								<MaName>MA</MaName>
								{maValues.map(([text, color, down]) => (
									<MaValue key={text} $color={color}>
										{text}
										<Arrow color={color} down={down} />
									</MaValue>
								))}
								<MaLinks>
									<span>深股通</span>
									<span>融资融券</span>
									<MaCaretLink>设置均线 <Caret $color="#686868" /></MaCaretLink>
								</MaLinks>
							</MaRow>
							<PriceChart />
							<VolumeHeader>
								<VolumeName>
									VOLUME:125.634万
									<Arrow color="#b8b8b8" />
								</VolumeName>
								<VolumeValue $color="#c8c800">
									MAVOL1:70.288万
									<Arrow color="#c8c800" />
								</VolumeValue>
								<VolumeValue $color="#c000c0">
									MAVOL2:88.512万
									<Arrow color="#c000c0" down />
								</VolumeValue>
								<VolumeTool>
									<span>改参数</span>
									<span>加指标</span>
									<span>换指标</span>
									<CloseBox>×</CloseBox>
								</VolumeTool>
							</VolumeHeader>
							<VolumeChart />
						</ChartColumn>
						<AxisColumn>
							<PriceAxis>
								{['9.00', '8.00', '7.00', '6.00', '5.00'].map((v) => (
									<AxisLabel key={v}>{v}</AxisLabel>
								))}
							</PriceAxis>
							<VolumeAxis>
								<span>550.00</span>
								<span>0.00</span>
							</VolumeAxis>
						</AxisColumn>
					</Body>
					<TimeRow>
						<TimeTick $w={85}>07</TimeTick>
						<TimeTick $w={71}>10</TimeTick>
						<TimeTick $w={39} $bold>2023</TimeTick>
						<DateChip>2023/03/03/五</DateChip>
						<TimeTick $w={79}>07</TimeTick>
						<TimeTick $w={70}>10</TimeTick>
						<TimeTick $w={72} $bold>2024</TimeTick>
						<TimeTick $w={79}>04</TimeTick>
						<TimeTick $w={85}>07</TimeTick>
						<TimeTick $w={71}>10</TimeTick>
						<TimeTick $w={87} $bold>2025</TimeTick>
						<ExpandBox>»</ExpandBox>
					</TimeRow>
					<TabBar>
						<Tab $on>成交量</Tab>
						<Tab $on>均线</Tab>
						{cnTabs.map((t) => (
							<Tab key={t}>{t}</Tab>
						))}
						{latinTabs.map((t) => (
							<Tab key={t} $latin>{t}</Tab>
						))}
						<MoreTab>更多</MoreTab>
						<TemplateTab>模板</TemplateTab>
					</TabBar>
				</Main>
				<Divider>
					<GripMark />
					<SideArrow />
				</Divider>
				<Panel>
					<QuoteHead>
						<TitleLine>
							<NavArrow $dir="left" />
							<Code>002097</Code>
							<StockName>山河智能</StockName>
							<NavArrow $dir="right" />
						</TitleLine>
						<PriceLine>
							<BigPrice>7.65</BigPrice>
							<Change>
								<div>+0.11</div>
								<div>+1.46%</div>
							</Change>
						</PriceLine>
					</QuoteHead>
					<StatusLine>
						<span>交易状态</span>
						<span>已收市</span>
					</StatusLine>
					<StatRow $h={19} $line>
						<StatCell><Label>委比</Label><Value $color={GREEN}>-64.03%</Value></StatCell>
						<StatCell><Label>委差</Label><Value $color={GREEN}>-12270</Value></StatCell>
					</StatRow>
					<PromoLine>抓住机会，即刻开户！</PromoLine>
					<BookGroup>
						{asks.map(([name, price, qty]) => (
							<BookRow key={name}>
								<BookPrice><Label>{name}</Label><Value $color={RED}>{price}</Value></BookPrice>
								<BookQty>{qty}</BookQty>
							</BookRow>
						))}
					</BookGroup>
					<BookGroup $bids>
						{bids.map(([name, price, qty]) => (
							<BookRow key={name}>
								<BookPrice><Label>{name}</Label><Value $color={RED}>{price}</Value></BookPrice>
								<BookQty>{qty}</BookQty>
							</BookRow>
						))}
					</BookGroup>
					<StatsBlock>
						{stats.map(([a, av, ac, b, bv, bc]) => (
							<StatRow key={a} $h={16}>
								<StatCell><Label>{a}</Label><Value $color={ac}>{av}</Value></StatCell>
								<StatCell><Label>{b}</Label><Value $color={bc}>{bv}</Value></StatCell>
							</StatRow>
						))}
					</StatsBlock>
				</Panel>
				<BubbleMark viewBox="0 0 50 46">
					<ellipse cx="18" cy="18" rx="15" ry="13" fill="rgba(205,205,205,0.82)" />
					<ellipse cx="33" cy="28" rx="12" ry="11" fill="rgba(190,190,190,0.82)" />
					<circle cx="13" cy="14" r="2" fill="#222" />
					<circle cx="23" cy="14" r="2" fill="#222" />
					<circle cx="29" cy="26" r="1.6" fill="#222" />
					<circle cx="37" cy="26" r="1.6" fill="#222" />
				</BubbleMark>
				<Watermark>
					<span>公众号</span>
					<WatermarkGap>·</WatermarkGap>
					<span>诺维投研</span>
				</Watermark>
				<FlierLogo viewBox="0 0 104 62">
					<path d="M26 28C30 12 40 5 50 5C68 5 84 13 87 25" fill="none" stroke="#0a8ccc" strokeWidth="5" strokeLinecap="round" />
					<path d="M3 38C16 26 36 24 40 23C26 28 16 34 16 40C22 53 74 52 96 38C82 55 62 61 49 61C30 61 10 52 3 38Z" fill="#0a8ccc" />
					<path d="M96 38C92 32 88 30 82 28C88 32 90 36 88 40Z" fill="#0a8ccc" />
					<path d="M24 37C34 36 42 34 50 30L62 27L58 33L46 37L36 38Z" fill="#d8780f" />
					<path d="M40 33L32 29L38 29L48 31Z" fill="#d8780f" />
				</FlierLogo>
				<FlierName>飞行者联盟</FlierName>
				<FlierLatin>China Flier</FlierLatin>
			</Page>
		</>
	);
}
